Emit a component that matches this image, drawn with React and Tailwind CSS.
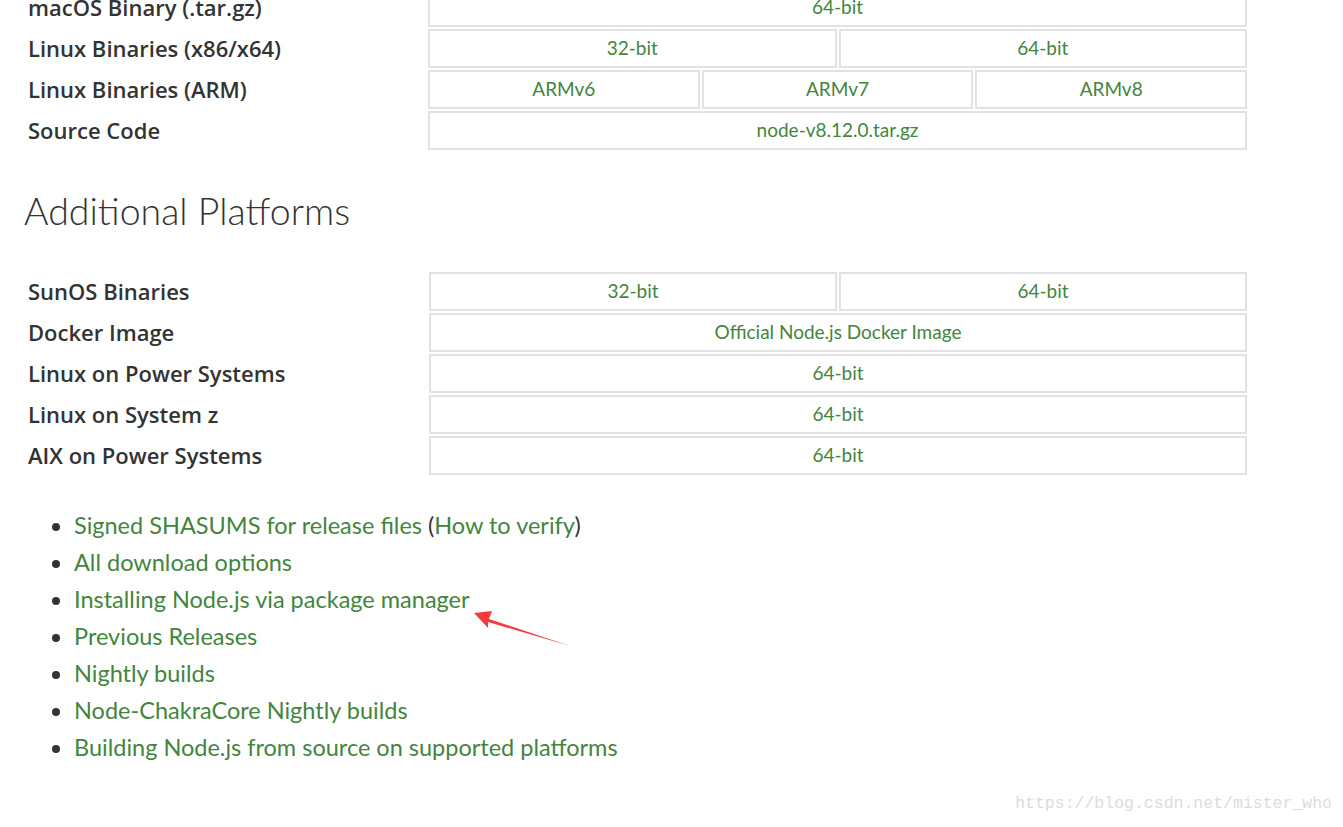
import React from 'react';

const green = 'text-[#43853d]';

const topRows = [
  { label: 'macOS Binary (.tar.gz)', cells: ['64-bit'] },
  { label: 'Linux Binaries (x86/x64)', cells: ['32-bit', '64-bit'] },
  { label: 'Linux Binaries (ARM)', cells: ['ARMv6', 'ARMv7', 'ARMv8'] },
  { label: 'Source Code', cells: ['node-v8.12.0.tar.gz'] },
];

const extraRows = [
  { label: 'SunOS Binaries', cells: ['32-bit', '64-bit'] },
  { label: 'Docker Image', cells: ['Official Node.js Docker Image'] },
  { label: 'Linux on Power Systems', cells: ['64-bit'] },
  { label: 'Linux on System z', cells: ['64-bit'] },
  { label: 'AIX on Power Systems', cells: ['64-bit'] },
];

const links = [
  'All download options',
  'Installing Node.js via package manager',
  'Previous Releases',
  'Nightly builds',
  'Node-ChakraCore Nightly builds',
  'Building Node.js from source on supported platforms',
];

function DownloadTable({ rows, left }) {
  return (
    <div className="flex flex-col gap-[2px]">
      {rows.map((row) => (
        <div key={row.label} className="flex items-center h-[39px]">
          <div className={`shrink-0 ${left} font-['Open_Sans',sans-serif] text-[22px] font-semibold text-[#333]`}>
            {row.label}
          </div>
          <div className="flex-1 flex gap-[2px] h-full">
            {row.cells.map((c) => (
              <div
                key={c}
                className={`flex-1 flex items-center justify-center border-2 border-[#e2e2e2] text-[19px] ${green}`}
              >
                {c}
              </div>
            ))}
          </div>
        </div>
      ))}
    </div>
  );
}

export default function App() {
  return (
    <div className="relative w-[1343px] h-[827px] overflow-hidden bg-white font-['Lato',sans-serif]">
      <div className="w-[1247px] mt-[-12px]">
        <div className="pl-[28px]">
          <DownloadTable rows={topRows} left="w-[400px]" />
        </div>

        <h2 className="pl-[24px] mt-[39px] text-[37.5px] font-light text-[#333] leading-[44px]">Additional Platforms</h2>

        <div className="pl-[28px] mt-[39px]">
          <DownloadTable rows={extraRows} left="w-[401px]" />
        </div>

        <ul className="mt-[32px] pl-[74px] list-disc marker:text-[#333] text-[23.5px] leading-[37px]">
          <li className={green}>
            Signed SHASUMS for release files <span className="text-[#333]">(</span>How to verify<span className="text-[#333]">)</span>
          </li>
          {links.map((l) => (
            <li key={l} className={green}>{l}</li>
          ))}
        </ul>
      </div>

      {/* red annotation arrow */}
      <svg className="absolute left-[470px] top-[606px]" width="104" height="44" viewBox="0 0 104 44">
        <polygon points="4,7 22,5 19,13 100,40 18,16 18,22" fill="#f53b3b" />
      </svg>

      <div className="absolute right-[11px] bottom-[10px] font-['Liberation_Mono',monospace] text-[16.5px] text-[#dcdcdc]">
        https://blog.csdn.net/mister_who
      </div>
    </div>
  );
}
